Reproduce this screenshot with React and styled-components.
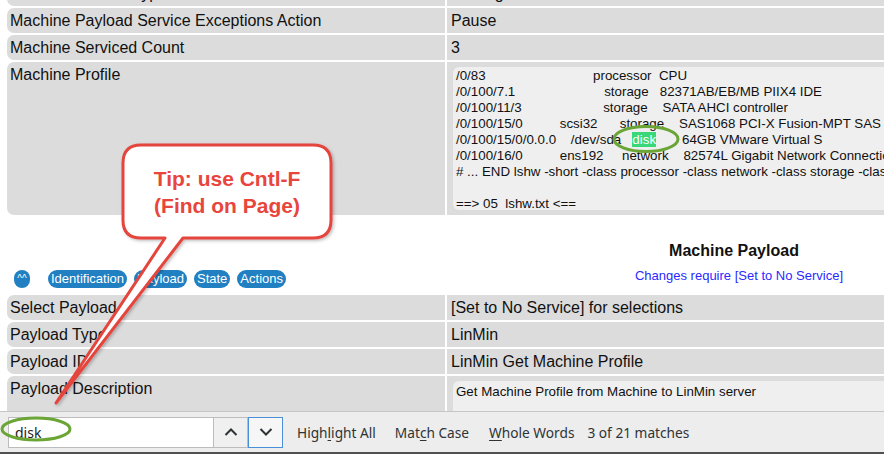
import React from 'react';
import styled, {createGlobalStyle} from 'styled-components';

const GlobalStyle = createGlobalStyle`
  html, body {
    margin: 0;
    padding: 0;
    overflow: hidden;
    background: #ffffff;
  }
  body {
    font-family: "Liberation Sans", Arial, sans-serif;
    color: #111111;
  }
`

const rows = [
    {label: 'Machine Service Type', value: 'Waiting'},
    {label: 'Machine Payload Service Exceptions Action', value: 'Pause'},
    {label: 'Machine Serviced Count', value: '3'},
]

const payloadRows = [
    {label: 'Select Payload', value: '[Set to No Service] for selections'},
    {label: 'Payload Type', value: 'LinMin'},
    {label: 'Payload ID', value: 'LinMin Get Machine Profile'},
]

const sp = n => ' '.repeat(n)

const App = () => {
    return (
        <Page>
            <GlobalStyle/>
            <Content>
                <Grid>
                    {rows.map(r => (
                        <React.Fragment key={r.label}>
                            <Label>{r.label}</Label>
                            <Value>{r.value}</Value>
                        </React.Fragment>
                    ))}
                    <Label>Machine Profile</Label>
                    <BoxCell>
                        <ProfileBox $height={143}>
                            {'/0/83' + sp(29) + 'processor' + sp(2) + 'CPU\n'}
                            {'/0/100/7.1' + sp(24) + 'storage' + sp(3) + '82371AB/EB/MB PIIX4 IDE\n'}
                            {'/0/100/11/3' + sp(22) + 'storage' + sp(4) + 'SATA AHCI controller\n'}
                            {'/0/100/15/0' + sp(10) + 'scsi32' + sp(6) + 'storage' + sp(4) + 'SAS1068 PCI-X Fusion-MPT SAS\n'}
                            {'/0/100/15/0/0.0.0' + sp(4) + '/dev/sda' + sp(3)}
                            <Found>disk</Found>
                            {sp(7) + '64GB VMware Virtual S\n'}
                            {'/0/100/16/0' + sp(10) + 'ens192' + sp(5) + 'network' + sp(4) + '82574L Gigabit Network Connection\n'}
                            {'# ... END lshw -short -class processor -class network -class storage -class disk\n'}
                            {'\n'}
                            {'==> 05  lshw.txt <=='}
                        </ProfileBox>
                    </BoxCell>

                    <NavCell>
                        <NavButton $round>^^</NavButton>
                        <NavButton>Identification</NavButton>
                        <NavButton>Payload</NavButton>
                        <NavButton>State</NavButton>
                        <NavButton>Actions</NavButton>
                    </NavCell>
                    <HeadCell>
                        <Heading>Machine Payload</Heading>
                        <Notice>Changes require [Set to No Service]</Notice>
                    </HeadCell>

                    {payloadRows.map(r => (
                        <React.Fragment key={r.label}>
                            <Label>{r.label}</Label>
                            <Value>{r.value}</Value>
                        </React.Fragment>
                    ))}
                    <Label>Payload Description</Label>
                    <BoxCell>
                        <ProfileBox $height={44} $pad="3px 3px">
                            Get Machine Profile from Machine to LinMin server
                        </ProfileBox>
                    </BoxCell>
                </Grid>
            </Content>

            <FindBar>
                <SearchField>disk</SearchField>
                <ArrowButton>
                    <svg width="14" height="8" viewBox="0 0 14 8">
                        <path d="M1.5 7 L7 1.5 L12.5 7" fill="none" stroke="#2e3436" strokeWidth="2"/>
                    </svg>
                </ArrowButton>
                <ArrowButton $focused>
                    <svg width="14" height="8" viewBox="0 0 14 8">
                        <path d="M1.5 1 L7 6.5 L12.5 1" fill="none" stroke="#2e3436" strokeWidth="2"/>
                    </svg>
                </ArrowButton>
                <Option $ml={14}>High<u>l</u>ight All</Option>
                <Option $ml={19}>Mat<u>c</u>h Case</Option>
                <Option $ml={20}><u>W</u>hole Words</Option>
                <Option $ml={13}>3 of 21 matches</Option>
            </FindBar>

            <Overlay width="884" height="454" viewBox="0 0 884 454">
                <defs>
                    <filter id="shadow" x="-20%" y="-20%" width="140%" height="140%">
                        <feDropShadow dx="1.5" dy="1.5" stdDeviation="1.5" floodColor="#000" floodOpacity="0.25"/>
                    </filter>
                </defs>
                <path
                    d="M141 145 H313 Q331 145 331 163 V220 Q331 238 313 238 H183 L56 403 L165 238 H141 Q123 238 123 220 V163 Q123 145 141 145 Z"
                    fill="#ffffff" stroke="#e4453d" strokeWidth="3" strokeLinejoin="round" filter="url(#shadow)"/>
                <ellipse cx="646" cy="139" rx="32" ry="12.5" fill="none" stroke="#6aa535" strokeWidth="3"/>
                <ellipse cx="36" cy="429" rx="34" ry="11" fill="none" stroke="#6aa535" strokeWidth="3"/>
            </Overlay>
            <Bubble>
                <span>Tip: use Cntl-F</span>
                <span>(Find on Page)</span>
            </Bubble>
        </Page>
    );
};

//-----------Page---------
const Page = styled.div`
position: relative;
width: 884px;
height: 454px;
display: flex;
flex-direction: column;
overflow: hidden;
`
const Content = styled.div`
flex: 1;
min-height: 0;
overflow: hidden;
`
const Grid = styled.div`
display: grid;
grid-template-columns: 438px 574px;
gap: 2px;
width: 1014px;
margin: -19px 0 0 7px;
`
const Label = styled.div`
background: #dcdcdc;
border-radius: 7px 0 0 7px;
padding: 3px;
font-size: 16px;
line-height: 19px;
`
const Value = styled.div`
background: #dcdcdc;
padding: 3px 4px;
font-size: 16px;
line-height: 19px;
`
const BoxCell = styled.div`
background: #dcdcdc;
padding: 5px 0 5px 6px;
`
const ProfileBox = styled.div`
height: ${p => p.$height}px;
box-sizing: border-box;
padding: ${p => p.$pad || '1px 3px'};
background: #efefef;
border-radius: 6px;
font-size: 13.33px;
line-height: 16px;
white-space: pre;
overflow: hidden;
`
const Found = styled.span`
background: #38d878;
color: #ffffff;
`

//-----------Section head---------
const NavCell = styled.div`
display: flex;
align-items: flex-end;
gap: 7px;
padding: 0 0 5px 7px;
`
const NavButton = styled.span`
display: inline-block;
background: #2180c2;
color: #ffffff;
font-size: ${p => p.$round ? '10px' : '13px'};
line-height: 18px;
height: 18px;
padding: ${p => p.$round ? '0' : '0 3px'};
width: ${p => p.$round ? '16px' : 'auto'};
text-align: center;
border-radius: 9px;
margin-right: ${p => p.$round ? '11px' : '0'};
`
const HeadCell = styled.div`
display: flex;
flex-direction: column;
align-items: center;
padding: 24px 0 10px;
`
const Heading = styled.div`
font-size: 16px;
line-height: 19px;
font-weight: bold;
`
const Notice = styled.div`
margin: 8px 0 0 10px;
font-size: 13px;
line-height: 15px;
color: #2a2aff;
`

//-----------Find bar---------
const FindBar = styled.div`
flex-shrink: 0;
height: 40px;
display: flex;
align-items: center;
padding-left: 8px;
background: #ededed;
border-top: 1px solid #c6c6c6;
border-bottom: 2px solid #505050;
font-family: "Noto Sans", sans-serif;
font-size: 13.7px;
color: #2e3436;
`
const SearchField = styled.div`
box-sizing: border-box;
width: 205px;
height: 31px;
padding: 0 6px;
display: flex;
align-items: center;
background: #ffffff;
border: 1px solid #bcbcbc;
border-right: none;
font-size: 14px;
color: #1e1e1e;
`
const ArrowButton = styled.div`
box-sizing: border-box;
width: 35px;
height: 31px;
display: flex;
align-items: center;
justify-content: center;
background: ${p => p.$focused ? '#f6f6f6' : '#f0f0f0'};
border: 1px solid ${p => p.$focused ? '#4a90d9' : '#bcbcbc'};
`
const Option = styled.span`
margin-left: ${p => p.$ml}px;
white-space: nowrap;
& u {
  text-underline-offset: 2px;
}
`

//-----------Annotation---------
const Overlay = styled.svg`
position: absolute;
left: 0;
top: 0;
pointer-events: none;
`
const Bubble = styled.div`
position: absolute;
left: 123px;
top: 145px;
width: 208px;
height: 93px;
display: flex;
flex-direction: column;
align-items: center;
justify-content: center;
color: #e8453c;
font-size: 21px;
line-height: 27px;
font-weight: bold;
pointer-events: none;
`

export default App;
